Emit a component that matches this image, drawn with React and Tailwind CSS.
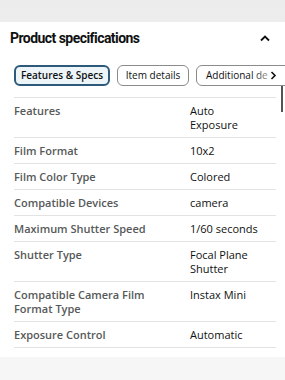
import React from "react";

const SPECS = [
  ["Features", "Auto Exposure"],
  ["Film Format", "10x2"],
  ["Film Color Type", "Colored"],
  ["Compatible Devices", "camera"],
  ["Maximum Shutter Speed", "1/60 seconds"],
  ["Shutter Type", "Focal Plane Shutter"],
  ["Compatible Camera Film Format Type", "Instax Mini"],
  ["Exposure Control", "Automatic"],
];

export default function App() {
  return (
    <div
      className="w-[285px] h-[380px] overflow-hidden bg-gradient-to-b from-[#ececec] via-[#f4f4f4] to-[#f6f6f6]"
      style={{ fontFamily: '"Open Sans", "Noto Sans", sans-serif' }}
    >
      <div className="h-[22px]" />
      <div className="relative bg-white h-[335px]">
        {/* Header */}
        <div className="flex items-center justify-between pl-[10px] pr-[10px] pt-[4px] h-[28px]">
          <h2
            className="text-[14px] font-bold text-[#0f1111] tracking-[-0.55px]"
            style={{ fontFamily: 'Roboto, "Noto Sans", sans-serif' }}
          >
            Product specifications
          </h2>
          <svg width="12" height="8" viewBox="0 0 12 8" className="mr-[4px]">
            <path d="M2 6.5 L6 2.5 L10 6.5" fill="none" stroke="#0f1111" strokeWidth="1.8" />
          </svg>
        </div>

        {/* Tabs */}
        <div className="flex items-center gap-[7px] pl-[14px] mt-[15px] h-[21px] overflow-hidden">
          <div className="h-[21px] w-[96px] shrink-0 flex items-center justify-center rounded-[6px] border-2 border-[#2d5a7b] bg-[#edf5f9] text-[10px] font-semibold text-[#0f1111]">
            Features &amp; Specs
          </div>
          <div className="h-[21px] w-[72px] shrink-0 flex items-center justify-center rounded-[6px] border border-[#888c8c] text-[10px] text-[#0f1111]">
            Item details
          </div>
          <div className="relative h-[21px] w-[100px] shrink-0 flex items-center pl-[9px] rounded-[6px] border border-[#888c8c] text-[10px] text-[#0f1111]">
            <span>Additional de</span>
            <div className="absolute right-[16px] top-0 h-full w-[26px] bg-gradient-to-r from-white/0 to-white" />
            <svg width="7" height="9" viewBox="0 0 7 9" className="absolute left-[73px] top-[5px]">
              <path d="M1.5 1 L5 4.5 L1.5 8" fill="none" stroke="#0f1111" strokeWidth="1.6" />
            </svg>
          </div>
        </div>

        {/* Scroll indicator */}
        <div className="absolute right-[2px] top-[64px] w-[2px] h-[26px] bg-[#555]" />

        {/* Table */}
        <div className="mx-[14px] mt-[11px] w-[262px] border-t border-[#e3e3e3]">
          {SPECS.map(([k, v]) => (
            <div key={k} className="flex border-b border-[#e3e3e3] pt-[6px] pb-[5px]">
              <div className="w-[176px] shrink-0 pr-[20px] text-[11px] leading-[14px] font-semibold text-[#565959]">
                {k}
              </div>
              <div className="w-[72px] text-[11px] leading-[14px] text-[#0f1111]">{v}</div>
            </div>
          ))}
        </div>
      </div>
    </div>
  );
}
